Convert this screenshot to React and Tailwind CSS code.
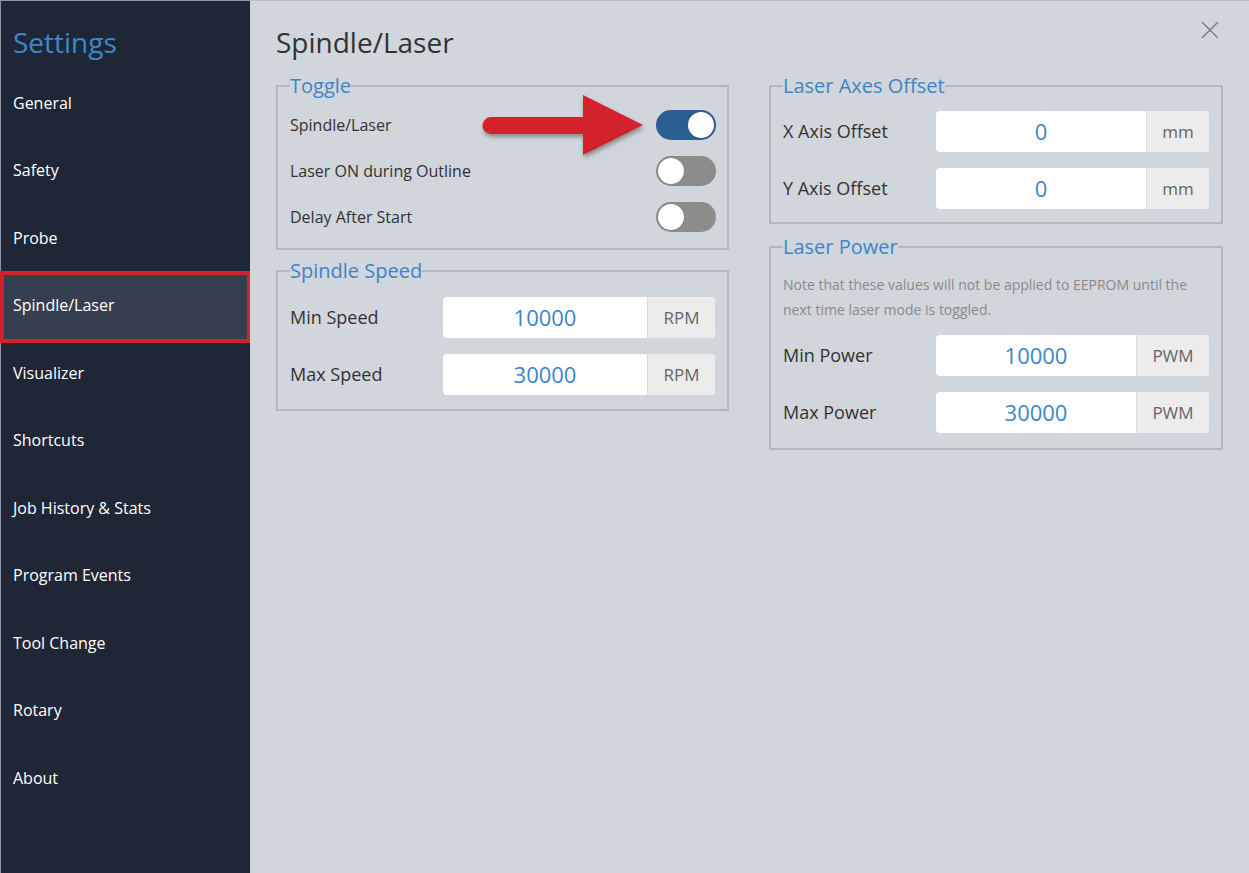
import React from "react";

const font = { fontFamily: '"Open Sans", "Noto Sans", Arial, sans-serif' };

const navItems = [
  "General",
  "Safety",
  "Probe",
  "Spindle/Laser",
  "Visualizer",
  "Shortcuts",
  "Job History & Stats",
  "Program Events",
  "Tool Change",
  "Rotary",
  "About",
];

function Switch({ on }) {
  return (
    <div
      className={
        "w-[60px] h-[30px] rounded-full flex items-center px-[2px] " +
        (on ? "bg-[#2b5e91] justify-end" : "bg-[#8c8c8c] justify-start")
      }
    >
      <div className="w-[26px] h-[26px] rounded-full bg-white shadow-[0_0_1px_rgba(0,0,0,0.4)]" />
    </div>
  );
}

function Field({ label, value, unit, unitW }) {
  return (
    <div className="flex items-center h-[41px]">
      <div className="w-[153px] text-[18px] text-[#333]">{label}</div>
      <div className="flex-1 flex h-[41px] rounded-[4px] overflow-hidden bg-white">
        <div className="flex-1 flex items-center justify-center text-[22px] text-[#3d85c6]">{value}</div>
        <div
          className={"flex items-center justify-center bg-[#ececec] border-l border-[#dcdcdc] text-[17px] text-[#666] " + unitW}
        >
          {unit}
        </div>
      </div>
    </div>
  );
}

function Box({ title, className = "", children }) {
  return (
    <fieldset className={"border-2 border-[#b3b7be] pl-[12px] " + className}>
      <legend className="text-[20px] leading-[28px] text-[#3d85c6] px-0">{title}</legend>
      {children}
    </fieldset>
  );
}

export default function App() {
  return (
    <div style={font} className="relative w-[1249px] h-[873px] flex overflow-hidden">
      <aside className="w-[250px] h-full bg-[#1f2736] border-l border-t border-[#8e95a0] flex flex-col shrink-0">
        <div className="h-[68px] pt-[22px] pl-[12px] text-[28px] leading-[38px] text-[#3c87cc]">Settings</div>
        {navItems.map((item) =>
          item === "Spindle/Laser" ? (
            <div key={item} className="relative h-[67.5px] flex items-center pl-[12px] text-[16px] text-white">
              <div className="absolute left-[-1px] w-[251px] top-[-1px] bottom-[-4px] bg-[#363f4f] border-[4px] border-[#d42029]" />
              <span className="relative">{item}</span>
            </div>
          ) : (
            <div key={item} className="h-[67.5px] flex items-center pl-[12px] text-[16px] text-white">
              {item}
            </div>
          )
        )}
      </aside>

      <main className="relative flex-1 bg-[#d1d5dc] border-t border-[#b8bcc3] px-[26px]">
        <div className="pt-[23px] text-[28px] leading-[36px] text-[#333]">Spindle/Laser</div>
        <button className="absolute right-[29px] top-[19px] w-[20px] h-[20px]">
          <svg viewBox="0 0 20 20" width="20" height="20">
            <path d="M2 2 L18 18 M18 2 L2 18" stroke="#7b7f86" strokeWidth="1.6" fill="none" />
          </svg>
        </button>

        <div className="mt-[12px] flex gap-[40px]">
          <div className="w-[453px] flex flex-col">
            <Box title="Toggle" className="pb-[16px] pr-[11px]">
              <div className="mt-[10px] flex flex-col gap-[16px]">
                <div className="flex items-center justify-between h-[30px]">
                  <span className="text-[16px] text-[#333]">Spindle/Laser</span>
                  <Switch on />
                </div>
                <div className="flex items-center justify-between h-[30px]">
                  <span className="text-[16px] text-[#333]">Laser ON during Outline</span>
                  <Switch />
                </div>
                <div className="flex items-center justify-between h-[30px]">
                  <span className="text-[16px] text-[#333]">Delay After Start</span>
                  <Switch />
                </div>
              </div>
            </Box>
            <Box title="Spindle Speed" className="mt-[7px] pb-[14px] pr-[12px]">
              <div className="mt-[12px] flex flex-col gap-[16px]">
                <Field label="Min Speed" value="10000" unit="RPM" unitW="w-[68px]" />
                <Field label="Max Speed" value="30000" unit="RPM" unitW="w-[68px]" />
              </div>
            </Box>
          </div>

          <div className="w-[454px] flex flex-col">
            <Box title="Laser Axes Offset" className="pb-[13px] pr-[12px]">
              <div className="mt-[11px] flex flex-col gap-[16px]">
                <Field label="X Axis Offset" value="0" unit="mm" unitW="w-[63px]" />
                <Field label="Y Axis Offset" value="0" unit="mm" unitW="w-[63px]" />
              </div>
            </Box>
            <Box title="Laser Power" className="mt-[9px] pb-[15px] pr-[12px]">
              <p className="mt-[11px] text-[14px] leading-[25px] text-[#8a8a8a]">
                Note that these values will not be applied to EEPROM until the next time laser mode is toggled.
              </p>
              <div className="mt-[13px] flex flex-col gap-[16px]">
                <Field label="Min Power" value="10000" unit="PWM" unitW="w-[73px]" />
                <Field label="Max Power" value="30000" unit="PWM" unitW="w-[73px]" />
              </div>
            </Box>
          </div>
        </div>
      </main>

      <svg
        className="absolute left-[475px] top-[90px]"
        width="176"
        height="72"
        viewBox="0 0 176 72"
        style={{ filter: "drop-shadow(1px 3px 2px rgba(0,0,0,0.35))" }}
      >
        <path
          d="M16 27 L108 27 L108 5 L168 35 L108 65 L108 44 L16 44 A8.5 8.5 0 0 1 16 27 Z"
          fill="#d3222b"
        />
      </svg>
    </div>
  );
}
